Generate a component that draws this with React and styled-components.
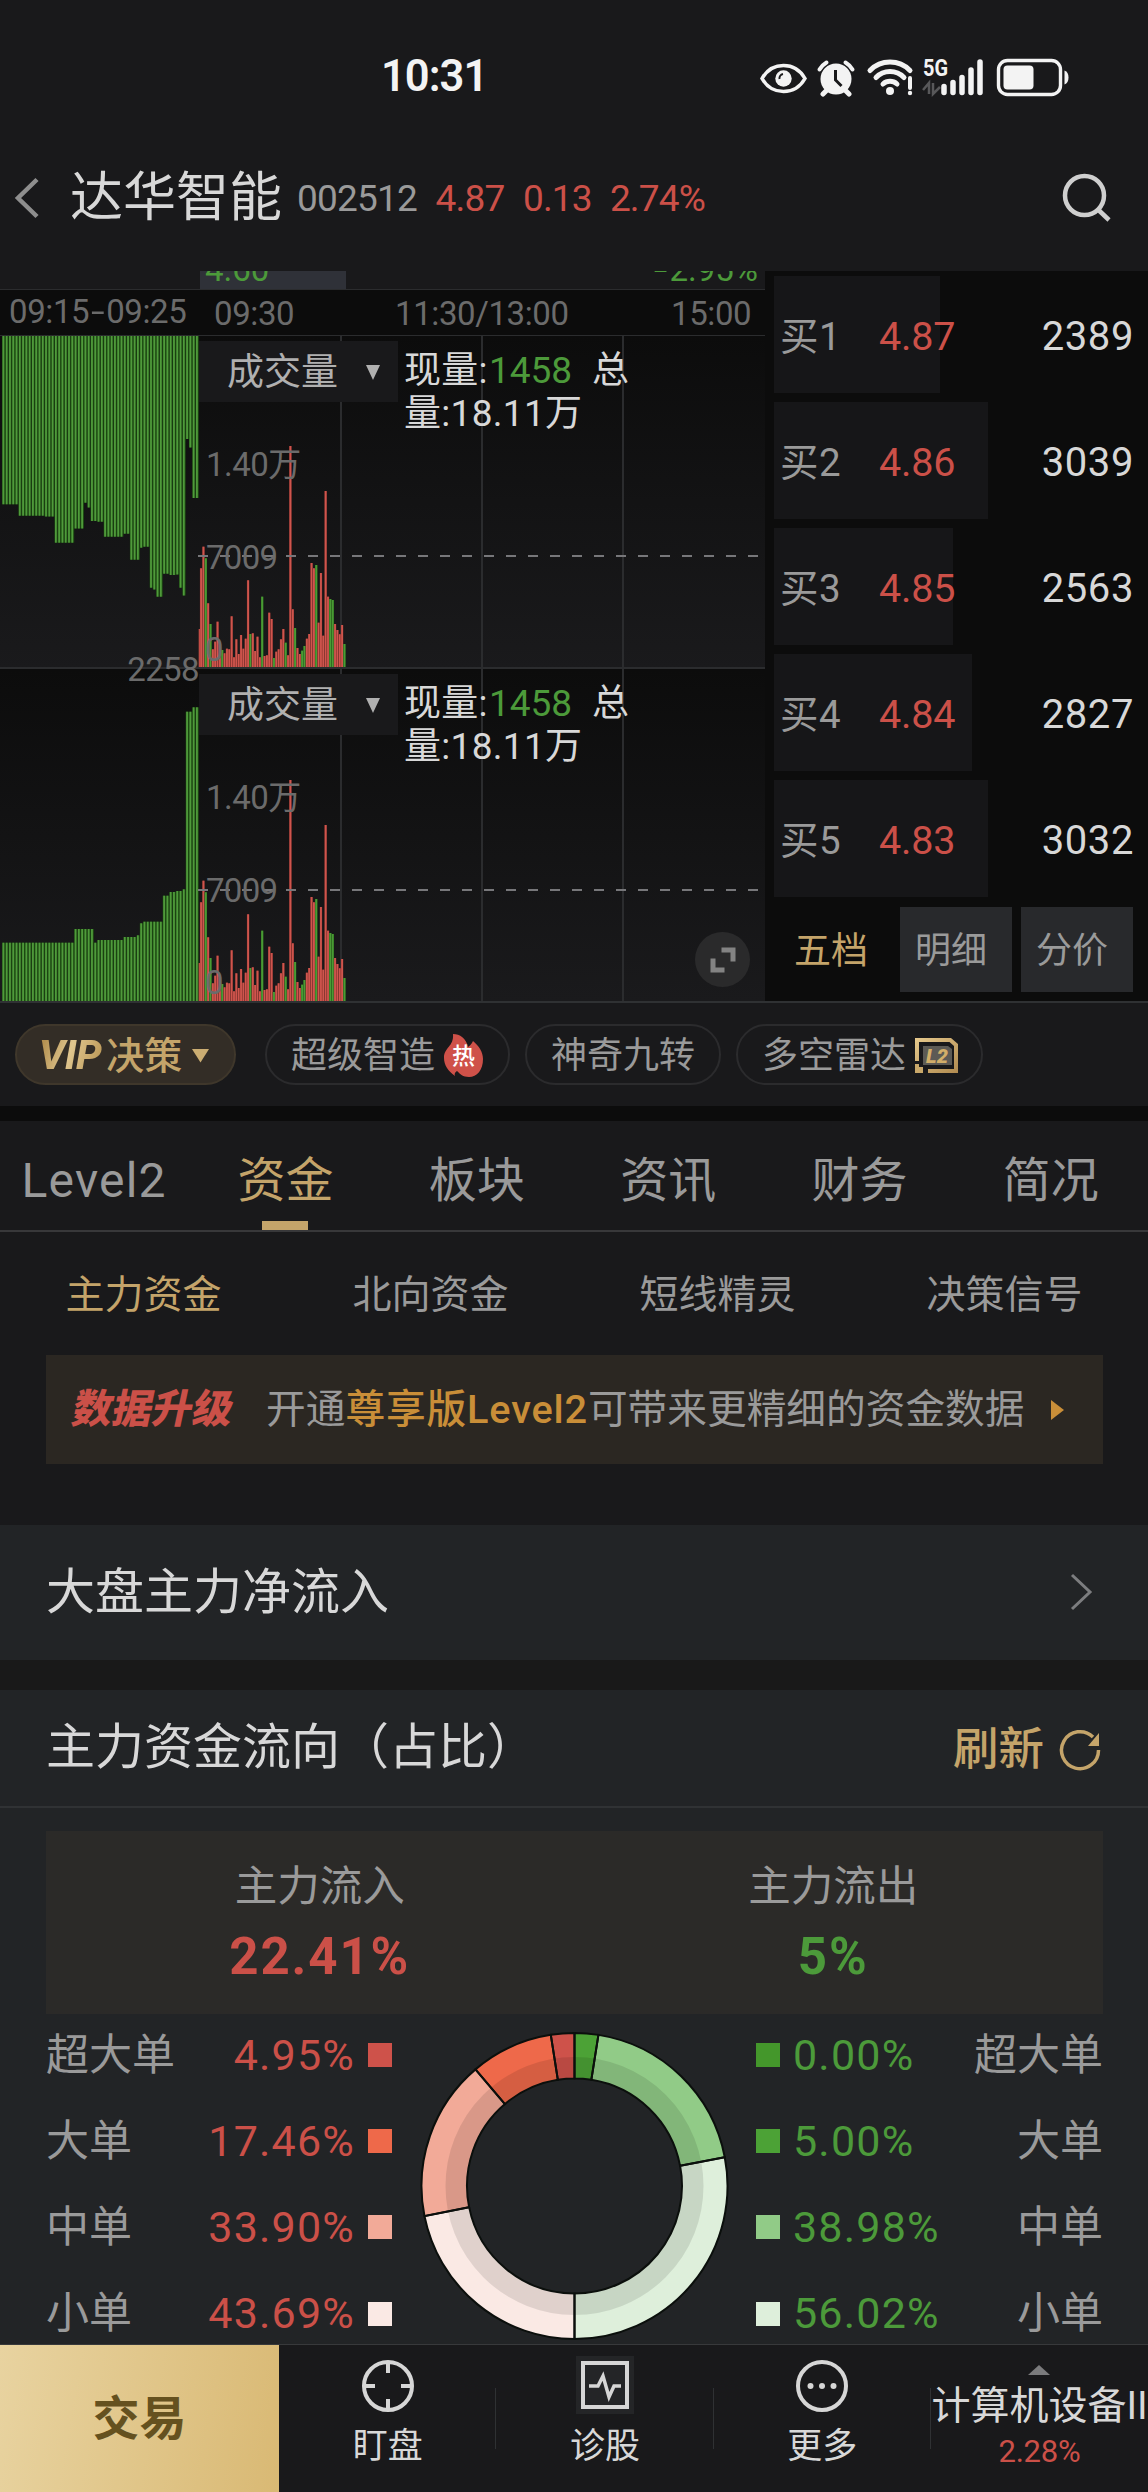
import React from "react";
import styled, { createGlobalStyle } from "styled-components";

const C = {
  bg: "#19191b",
  deep: "#0c0c0c",
  card: "#222426",
  line: "#2f3133",
  grid: "#2b2c2e",
  dim: "#6b6b6b",
  grey: "#9a9a9a",
  white: "#d8d8d8",
  red: "#cb5048",
  green: "#4c9a3a",
  gold: "#c4a46a",
};

const Global = createGlobalStyle`
  html, body { margin: 0; padding: 0; background: ${C.bg}; }
  * { box-sizing: border-box; }
  body {
    font-family: Roboto, "Noto Sans CJK SC", sans-serif;
    -webkit-font-smoothing: antialiased;
  }
`;

const Page = styled.div`
  width: 1148px;
  height: 2492px;
  overflow: hidden;
  display: flex;
  flex-direction: column;
  background: ${C.bg};
`;

const Txt = styled.span`
  display: block;
  flex: none;
  white-space: pre;
  line-height: 1;
  font-size: ${(p) => p.$s || 36}px;
  color: ${(p) => p.$c || C.grey};
  font-weight: ${(p) => p.$w || 400};
  letter-spacing: ${(p) => p.$ls || 0}px;
`;

/* ---------- status bar ---------- */
const StatusBar = styled.div`
  flex: none;
  height: 124px;
  padding: 30px 79px 0 381px;
  display: flex;
  align-items: center;
  justify-content: space-between;
`;
const StatusIcons = styled.div`
  display: flex;
  align-items: center;
`;

const StatusGlyphs = () => (
  <svg width="309" height="40" viewBox="760 57 309 40" fill="none">
    <path d="M762 78.500C768 68 776 65.500 783.500 65.500S799 68 805 78.500C799 89 791 91.500 783.500 91.500S768 89 762 78.500Z" stroke="#f3f3f3" strokeWidth="3.500" />
    <circle cx="783.500" cy="78.500" r="8.200" fill="#f3f3f3" />
    <path d="M779.500 79a4.500 4.500 0 0 1 3.500-5" stroke="#19191b" strokeWidth="2" />
    <circle cx="836" cy="79" r="15.500" fill="#f3f3f3" />
    <path d="M819.500 69.500a20 20 0 0 1 7-7M845.500 62.500a20 20 0 0 1 7 7" stroke="#f3f3f3" strokeWidth="4" strokeLinecap="round" />
    <path d="M827 90l-4 4M845 90l4 4" stroke="#f3f3f3" strokeWidth="5" strokeLinecap="round" />
    <path d="M835.500 70v10l6 6" stroke="#19191b" strokeWidth="3" />
    <path d="M870 70.500a28 28 0 0 1 40 0" stroke="#f3f3f3" strokeWidth="5" strokeLinecap="round" />
    <path d="M876 77.500a19.500 19.500 0 0 1 28 0" stroke="#f3f3f3" strokeWidth="5" strokeLinecap="round" />
    <path d="M883 84a10.500 10.500 0 0 1 14 0" stroke="#f3f3f3" strokeWidth="5" strokeLinecap="round" />
    <circle cx="890" cy="91" r="4" fill="#f3f3f3" />
    <path d="M910 78v10" stroke="#f3f3f3" strokeWidth="4" strokeLinecap="round" />
    <circle cx="910" cy="93" r="2.200" fill="#f3f3f3" />
    <text x="923" y="76" fontSize="23" fontWeight="700" fontFamily="Roboto" textLength="25" lengthAdjust="spacingAndGlyphs" fill="#f3f3f3">5G</text>
    <path d="M923 90l6-7v11M933 83v11l7-7" stroke="#58585a" strokeWidth="2.500" />
    <path d="M944 86.500v6M953 82.500v10M962 77.500v15M971 70v22.500M980 62v30.500" stroke="#f3f3f3" strokeWidth="5.500" strokeLinecap="round" />
    <rect x="998.500" y="60.500" width="62" height="34" rx="9" stroke="#f3f3f3" strokeWidth="3.400" />
    <rect x="1003.500" y="65.500" width="30" height="24" rx="4" fill="#f3f3f3" />
    <path d="M1064.500 70.500q4 1.500 4 7t-4 7z" fill="#f3f3f3" />
  </svg>
);

/* ---------- title bar ---------- */
const TitleBar = styled.header`
  flex: none;
  height: 147px;
  padding: 1px 36px 0 14px;
  display: flex;
  align-items: center;
`;
const TitleName = styled(Txt)`
  margin: 0 15px 0 30px;
`;
const Quote = styled(Txt)`
  margin-right: ${(p) => p.$mr || 0}px;
`;
const Spring = styled.div`
  flex: 1;
`;

/* ---------- market area ---------- */
const Market = styled.section`
  flex: none;
  height: 732px;
  display: flex;
  background: ${C.deep};
  border-bottom: 2px solid ${C.line};
`;
const Charts = styled.div`
  width: 765px;
  display: flex;
  flex-direction: column;
`;
const PriceStrip = styled.div`
  flex: none;
  height: 18px;
  overflow: hidden;
  display: flex;
  justify-content: space-between;
  background: ${C.bg};
  padding-right: 7px;
`;
const PriceFoot = styled.div`
  width: 347px;
  height: 18px;
  padding-left: 205px;
  display: flex;
  background: linear-gradient(90deg, transparent 200px, #2f3138 200px, #2f3138 346px, transparent 346px);
`;
const Clipped = styled(Txt)`
  margin-top: ${(p) => p.$mt}px;
`;
const TimeAxis = styled.div`
  flex: none;
  height: 47px;
  display: grid;
  grid-template-columns: 199px 182px 1fr 80px;
  align-items: center;
  border-top: 1px solid ${C.grid};
  border-bottom: 1px solid ${C.grid};
  padding-right: 14px;
`;
const AxisCell = styled.div`
  display: flex;
  padding: ${(p) => p.$pt || 0}px 0 ${(p) => p.$pb || 0}px ${(p) => p.$pl || 0}px;
`;
const Hyphen = styled.span`
  display: inline-block;
  width: 17px;
  text-align: center;
  transform: scaleX(1.5);
`;
const Panel = styled.div`
  flex: none;
  height: ${(p) => p.$h}px;
  position: relative;
  background: linear-gradient(180deg, #0c0c0c, #1a1a1c);
`;
const PanelSvg = styled.svg`
  display: block;
`;
const Selector = styled.div`
  position: absolute;
  left: 199px;
  top: 5px;
  width: 199px;
  height: 61px;
  background: ${C.bg};
  display: flex;
  align-items: center;
  justify-content: space-between;
  padding: 1px 18px 0 28px;
`;
const Down = styled.i`
  width: 0;
  height: 0;
  border-left: ${(p) => p.$w}px solid transparent;
  border-right: ${(p) => p.$w}px solid transparent;
  border-top: ${(p) => p.$h}px solid ${(p) => p.$c};
`;
const Info = styled.div`
  position: absolute;
  left: 404px;
  top: 13px;
  width: 250px;
  font-size: 37px;
  line-height: 43px;
  letter-spacing: 0.3px;
  color: ${C.white};
  em { font-style: normal; color: ${C.green}; margin-left: 1px; letter-spacing: 0; }
  i { display: inline-block; width: 20px; }
`;
const Mark = styled(Txt)`
  position: absolute;
  ${(p) => (p.$r ? `right: ${p.$r}px` : `left: ${p.$x}px`)};
  top: ${(p) => p.$y}px;
`;
const Expand = styled.div`
  position: absolute;
  left: 695px;
  top: 263px;
  width: 55px;
  height: 55px;
  border-radius: 50%;
  background: #2a2a2b;
  display: flex;
  align-items: center;
  justify-content: center;
`;

const auctionHanging = [
  [51, 504.3], [129, 515.7], [159, 516.5], [217, 542.7], [247, 528.5], [265, 502.7], [275, 507.5], [286, 521],
  [295, 518.5], [313, 521.7], [373, 536.7], [391, 533.7], [420, 559.7], [430, 547.7], [451, 546.7], [460, 587.7],
  [469, 589.5], [490, 596.7], [508, 573.7], [529, 575], [538, 574.5], [547, 587.7], [556, 595.5], [566, 439],
  [576, 447.5], [600, 498],
];
const auctionRising = [
  [217, 942.7], [276, 929], [286, 942.7], [373, 940], [412, 937], [421, 935.3], [430, 923.3], [490, 921.7],
  [508, 895.7], [529, 892], [547, 891], [556, 889.3], [576, 711.7], [600, 707.3],
];
const level = (steps, i) => {
  const x = 10 + i * 9.85;
  return (steps.find((s) => x <= s[0]) || steps[steps.length - 1])[1];
};

const trades =
  "r98.7 r120.3 g108.7 r63.7 g43 r17.7 r25.3 r45.3 r24.3 g17 r13.7 r18.3 r17.7 r50.7 r9.7 r27.7 r13 r32 r18.3 r28.3 r86.7 g33 r33.7 r16 r30.3 r9.7 g70.3 r11 r11.7 r54.3 r48 g9 r15.3 r17.7 r27.7 r38 g24.3 r11.7 r221 r57.7 g39 r19 r13 g16.3 g21 r28.3 r33 r104 r98.7 g102 r44.3 r94 r31.300 r176 r70.300 g68 g67 r43 r37 r32.700 r42 g23"
    .split(" ")
    .map((t) => ({ up: t[0] === "r", h: parseFloat(t.slice(1)) }));

const Stripe = ({ x, y, h }) => (
  <g>
    <rect x={x} y={y} width="3.300" height={h} fill="#1d4a12" />
    <rect x={x + 0.500} y={y} width="1.800" height={h} fill="#4f9a3b" />
  </g>
);

const VolumePanel = ({ height, base, offset, steps, hanging, children }) => {
  const dash = hanging ? 220 : 221;
  return (
    <Panel $h={height}>
      <PanelSvg width="765" height={height}>
        <g fill={C.grid}>
          <rect x="340" y="0" width="2" height={height} />
          <rect x="481" y="0" width="2" height={height} />
          <rect x="622" y="0" width="2" height={height} />
          {hanging && <rect x="0" y={base} width="765" height="2" />}
        </g>
        {Array.from({ length: 60 }, (_, i) => {
          const v = level(steps, i) - offset;
          return hanging ? (
            <Stripe key={i} x={2 + i * 3.280} y={0} h={v} />
          ) : (
            <Stripe key={i} x={2 + i * 3.280} y={v} h={base - v} />
          );
        })}
        <rect x="198.700" y={base - 38} width="1.300" height="38" fill={C.red} />
        {trades.map((t, i) => (
          <g key={i}>
            <rect x={199.900 + i * 2.350} y={base - t.h} width="2.400" height={t.h} fill={t.up ? "#7e2f2b" : "#2a6a1a"} />
            <rect x={200.200 + i * 2.350} y={base - t.h} width="1.800" height={t.h} fill={t.up ? "#cf554d" : "#4a9a35"} />
          </g>
        ))}
        <path d={`M198 ${dash}H760`} stroke="#77777a" strokeWidth="2" strokeDasharray="10 12" />
      </PanelSvg>
      <Selector>
        <Txt $s={37} $c="#b0b0b0">成交量</Txt>
        <Down $w={7.5} $h={15} $c="#b0b0b0" />
      </Selector>
      <Info>
        现量:<em>1458</em><i />总<br />量:18.11万
      </Info>
      <Mark $s={33} $c={C.dim} $x={206} $y={112} $ls={-0.5}>1.40万</Mark>
      <Mark $s={33} $c={C.dim} $x={206} $y={204.5} $ls={-0.7}>7009</Mark>
      <Mark $s={33} $c={C.dim} $x={205} $y={297}>0</Mark>
      {children}
    </Panel>
  );
};

/* ---------- order book ---------- */
const Book = styled.div`
  width: 383px;
  padding: 5px 0 0 9px;
  display: flex;
  flex-direction: column;
`;
const BookRow = styled.div`
  flex: none;
  height: 117px;
  margin-bottom: 9px;
  padding: 5px 14px 0 6px;
  display: grid;
  grid-template-columns: 99px 1fr auto;
  align-items: center;
  background: linear-gradient(#161618, #161618) 0 0 / ${(p) => p.$w}px 100% no-repeat;
`;
const BookTabs = styled.div`
  display: flex;
  gap: 9px;
  height: 86px;
  padding-top: 1px;
`;
const BookTab = styled.div`
  width: ${(p) => (p.$on ? 117 : 112)}px;
  height: 85px;
  display: flex;
  align-items: center;
  padding-top: 3px;
  padding-left: ${(p) => (p.$on ? 20 : 15)}px;
  background: ${(p) => (p.$on ? "transparent" : "#28292c")};
`;

/* ---------- tool pills ---------- */
const Pills = styled.div`
  flex: none;
  height: 103px;
  padding: 21px 0 0 15px;
  display: flex;
  align-items: flex-start;
`;
const Pill = styled.div`
  width: ${(p) => p.$w}px;
  height: 61px;
  margin-right: ${(p) => p.$mr}px;
  display: flex;
  align-items: center;
  border-radius: 31px;
  border: 2px solid ${(p) => (p.$vip ? "#3f372b" : "#2b2b2d")};
  background: ${(p) => (p.$vip ? "#332d26" : "transparent")};
  padding: 2px 0 0 ${(p) => (p.$vip ? 22 : 24)}px;
`;
const Vip = styled(Txt)`
  font-style: italic;
  padding-right: 5px;
  background: linear-gradient(110deg, #a98443, #e0c68e 45%, #b18b47);
  -webkit-background-clip: text;
  background-clip: text;
  color: transparent;
`;
const PillArt = styled.svg`
  flex: none;
  margin-left: ${(p) => p.$ml}px;
`;
const Band = styled.div`
  flex: none;
  height: ${(p) => p.$h}px;
  background: ${(p) => p.$c || C.deep};
`;

/* ---------- tabs ---------- */
const Tabs = styled.nav`
  flex: none;
  height: 111px;
  display: grid;
  grid-template-columns: repeat(6, 1fr);
  border-bottom: 2px solid #38383a;
`;
const Tab = styled.div`
  display: flex;
  flex-direction: column;
  align-items: center;
  justify-content: space-between;
  padding: 36px 3px 0 0;
  &::after {
    content: "";
    width: 46px;
    height: 9px;
    background: ${(p) => (p.$on ? C.gold : "transparent")};
  }
`;
const SubTabs = styled.nav`
  flex: none;
  height: 123px;
  padding-top: 3px;
  display: grid;
  grid-template-columns: repeat(4, 1fr);
  justify-items: center;
  align-items: center;
`;
const Notice = styled.div`
  flex: none;
  height: 109px;
  margin: 0 45px 61px 46px;
  padding: 0 0 0 27px;
  display: flex;
  align-items: center;
  background: #2b2722;
`;
const NoticeTag = styled(Txt)`
  transform: skewX(-12deg);
  margin-right: 33px;
`;
const NoticeText = styled(Txt)`
  b { font-weight: 500; color: #c98e38; letter-spacing: 0.85px; }
`;
const RightTri = styled.i`
  margin-left: 27px;
  border-top: 10px solid transparent;
  border-bottom: 10px solid transparent;
  border-left: 13px solid #c98e38;
`;

/* ---------- cards ---------- */
const LinkCard = styled.div`
  flex: none;
  height: 135px;
  padding: 0 55px 1px 46px;
  display: flex;
  align-items: center;
  justify-content: space-between;
  background: ${C.card};
`;
const FlowCard = styled.section`
  flex: none;
  height: 654px;
  overflow: hidden;
  background: ${C.card};
`;
const FlowHead = styled.div`
  height: 118px;
  padding: 0 46px 1px 46px;
  display: flex;
  align-items: center;
  border-bottom: 2px solid #303234;
`;
const Refresh = styled.div`
  margin-left: auto;
  padding-top: 4px;
  display: flex;
  align-items: center;
  gap: 15px;
`;
const Summary = styled.div`
  height: 183px;
  margin: 23px 45px 0 46px;
  padding: 0 13px 0 17px;
  display: grid;
  grid-template-columns: 1fr 1fr;
  background: #2b2a28;
`;
const SummaryCell = styled.div`
  display: flex;
  flex-direction: column;
  align-items: center;
  padding-top: 35px;
  gap: 22px;
`;
const Breakdown = styled.div`
  padding: 0 45px 0 46px;
  display: flex;
  justify-content: space-between;
  align-items: flex-start;
`;
const Legend = styled.div`
  width: ${(p) => (p.$right ? 347 : 346)}px;
  margin-top: -2px;
`;
const LegendRow = styled.div`
  height: 86.2px;
  display: flex;
  align-items: center;
  justify-content: space-between;
  flex-direction: ${(p) => (p.$right ? "row-reverse" : "row")};
`;
const LegendValue = styled.div`
  display: flex;
  align-items: center;
  gap: 13px;
  flex-direction: ${(p) => (p.$right ? "row-reverse" : "row")};
`;
const Swatch = styled.i`
  width: 24px;
  height: 24px;
  background: ${(p) => p.$c};
`;
const DonutSvg = styled.svg`
  display: block;
  margin-top: 17px;
`;

const inflow = [
  { name: "超大单", value: "4.95%", share: 4.95, color: "#ce524a" },
  { name: "大单", value: "17.46%", share: 17.46, color: "#ee694a" },
  { name: "中单", value: "33.90%", share: 33.9, color: "#f2aa98" },
  { name: "小单", value: "43.69%", share: 43.69, color: "#fae9e4" },
];
const outflow = [
  { name: "超大单", value: "0.00%", share: 0, color: "#44972b" },
  { name: "大单", value: "5.00%", share: 5, color: "#4ca236" },
  { name: "中单", value: "38.98%", share: 38.98, color: "#91cb87" },
  { name: "小单", value: "56.02%", share: 56.02, color: "#deefdb" },
];

const Donut = () => {
  const R = 153, r = 107.5, m = 129;
  const pt = (rad, deg) => {
    const a = (deg * Math.PI) / 180;
    return `${(154.5 + rad * Math.sin(a)).toFixed(2)} ${(155 - rad * Math.cos(a)).toFixed(2)}`;
  };
  const ring = (o, n, a, b) =>
    `M${pt(o, a)}A${o} ${o} 0 0 1 ${pt(o, b)}L${pt(n, b)}A${n} ${n} 0 0 0 ${pt(n, a)}Z`;
  const slices = [];
  let at = 0;
  [...outflow.filter((s) => s.share > 0), ...[...inflow].reverse()].forEach((s) => {
    const end = at + s.share * 1.8;
    slices.push({ color: s.color, a: at, b: end });
    at = end;
  });
  return (
    <DonutSvg width="309" height="310">
      {slices.map((s, i) => (
        <path key={i} d={ring(R, r, s.a, s.b)} fill={s.color} />
      ))}
      <circle cx="154.500" cy="155" r={(m + r) / 2} fill="none" stroke="#000" strokeOpacity="0.100" strokeWidth={m - r} />
      {slices.map((s, i) => (
        <path key={i} d={ring(R, r, s.a, s.b)} fill="none" stroke="#0b0f0c" strokeWidth="2" />
      ))}
    </DonutSvg>
  );
};

/* ---------- bottom bar ---------- */
const BottomBar = styled.footer`
  flex: none;
  height: 148px;
  display: flex;
  border-top: 1px solid #38393b;
  background: ${C.bg};
`;
const TradeButton = styled.div`
  width: 279px;
  display: flex;
  align-items: center;
  justify-content: center;
  background: linear-gradient(100deg, #e8d3a0, #d9b974);
`;
const NavItem = styled.div`
  flex: 1;
  display: flex;
  flex-direction: column;
  align-items: center;
  padding-top: 10px;
  gap: 14px;
  background: linear-gradient(${C.line}, ${C.line}) 100% 43px / 1px 61px no-repeat;
`;
const IndexItem = styled.div`
  width: 217px;
  overflow: hidden;
  display: flex;
  flex-direction: column;
  align-items: center;
  padding-top: 20px;
`;
const Up = styled.i`
  border-left: 11px solid transparent;
  border-right: 11px solid transparent;
  border-bottom: 10px solid #7b7b7d;
  margin-bottom: 12px;
`;
const IndexName = styled(Txt)`
  margin-bottom: 10px;
`;

const bids = [
  ["买1", "4.87", "2389", 166],
  ["买2", "4.86", "3039", 214],
  ["买3", "4.85", "2563", 179],
  ["买4", "4.84", "2827", 198],
  ["买5", "4.83", "3032", 214],
];

export default function App() {
  return (
    <Page>
      <Global />
      <StatusBar>
        <Txt $s={43.500} $c="#f3f3f3" $w={600} $ls={-1}>10:31</Txt>
        <StatusIcons>
          <StatusGlyphs />
        </StatusIcons>
      </StatusBar>

      <TitleBar>
        <svg width="26" height="42" fill="none">
          <path d="M23 2.500L4 21l19 18.500" stroke="#8e8e8e" strokeWidth="4.500" />
        </svg>
        <TitleName $s={53} $c={C.white}>达华智能</TitleName>
        <Quote $s={37} $c={C.grey} $ls={-0.8} $mr={18.500}>002512</Quote>
        <Quote $s={37} $c={C.red} $ls={-0.8} $mr={18.500}>4.87</Quote>
        <Quote $s={37} $c={C.red} $ls={-0.8} $mr={18}>0.13</Quote>
        <Quote $s={37} $c={C.red} $ls={-0.8}>2.74%</Quote>
        <Spring />
        <svg width="50" height="50" fill="none">
          <circle cx="22.500" cy="22.500" r="19.500" stroke="#cfcfcf" strokeWidth="4.500" />
          <path d="M36 36.500l11 10.500" stroke="#cfcfcf" strokeWidth="4.500" />
        </svg>
      </TitleBar>

      <Market>
        <Charts>
          <PriceStrip>
            <PriceFoot>
              <Clipped $s={33} $c={C.green} $mt={-18}>4.60</Clipped>
            </PriceFoot>
            <Clipped $s={33} $c={C.green} $mt={-18} $ls={0}>
              <Hyphen>-</Hyphen>2.95%
            </Clipped>
          </PriceStrip>
          <TimeAxis>
            <AxisCell $pl={9} $pb={2}>
              <Txt $s={33} $c={C.dim} $ls={-0.4}>
                09:15<Hyphen>-</Hyphen>09:25
              </Txt>
            </AxisCell>
            <AxisCell $pl={15} $pt={2}>
              <Txt $s={33} $c={C.dim} $ls={-0.4}>09:30</Txt>
            </AxisCell>
            <AxisCell $pl={14} $pt={2}>
              <Txt $s={33} $c={C.dim} $ls={-0.4}>11:30/13:00</Txt>
            </AxisCell>
            <AxisCell $pt={2}>
              <Txt $s={33} $c={C.dim} $ls={-0.4}>15:00</Txt>
            </AxisCell>
          </TimeAxis>
          <VolumePanel height={333} base={331} offset={336} steps={auctionHanging} hanging />
          <VolumePanel height={332} base={332} offset={669} steps={auctionRising}>
            <Mark $s={33} $c={C.dim} $r={566} $y={-16} $ls={-0.6}>2258</Mark>
            <Expand>
              <svg width="26" height="26" fill="none" stroke="#838383" strokeWidth="5">
                <path d="M11.500 3H23v11.500M3 11.500V23h11.500" />
              </svg>
            </Expand>
          </VolumePanel>
        </Charts>
        <Book>
          {bids.map(([side, price, volume, w]) => (
            <BookRow key={side} $w={w}>
              <Txt $s={38.500} $ls={0.6}>{side}</Txt>
              <Txt $s={39.500} $c={C.red} $ls={-0.2}>{price}</Txt>
              <Txt $s={40} $c={C.white} $ls={0.6}>{volume}</Txt>
            </BookRow>
          ))}
          <BookTabs>
            <BookTab $on>
              <Txt $s={37} $c={C.gold}>五档</Txt>
            </BookTab>
            <BookTab>
              <Txt $s={36}>明细</Txt>
            </BookTab>
            <BookTab>
              <Txt $s={36}>分价</Txt>
            </BookTab>
          </BookTabs>
        </Book>
      </Market>

      <Pills>
        <Pill $vip $w={221} $mr={29}>
          <Vip $s={41} $w={800} $ls={-0.5}>VIP</Vip>
          <Txt $s={38} $c={C.gold} $w={500}>决策</Txt>
          <PillArt $ml={10} width="17" height="14">
            <path d="M0 0H17L8.500 13.500Z" fill="#cbad72" />
          </PillArt>
        </Pill>
        <Pill $w={245} $mr={15}>
          <Txt $s={36}>超级智造</Txt>
          <PillArt $ml={8} width="42" height="46" viewBox="0 0 42 46">
            <path d="M10 1C17 1 23 5 25 14C28 12 29 10 30 8C36 13 40 19 40 26C40 37 34 44 26 44C20 44 17 41 14 38C12 39 11 41 12 43C5 38 1 32 1 25C1 14 11 14 10 1Z" fill="#cf5149" />
            <text x="20.500" y="31" fontSize="23" fontWeight="500" textAnchor="middle" fill="#fff">热</text>
          </PillArt>
        </Pill>
        <Pill $w={196} $mr={15}>
          <Txt $s={36}>神奇九转</Txt>
        </Pill>
        <Pill $w={247} $mr={0}>
          <Txt $s={36}>多空雷达</Txt>
          <PillArt $ml={9} width="44" height="36" viewBox="0 0 44 36">
            <defs>
              <linearGradient id="l2" x1="0" y1="0" x2="1" y2="1">
                <stop offset="0" stopColor="#e6c98d" />
                <stop offset="1" stopColor="#b18b50" />
              </linearGradient>
            </defs>
            <path d="M0 0H36L43 6V35H13V31H39V8L34.500 4H4V23H0Z" fill="url(#l2)" />
            <path d="M0 26H4V29H8V35H0Z" fill="#c9a86a" />
            <path d="M8 8H33L37 11V27H8Z" fill="#5c5a55" />
            <text x="22" y="25" fontSize="20" fontWeight="900" fontStyle="italic" textAnchor="middle" fill="#d2ae69">L2</text>
          </PillArt>
        </Pill>
      </Pills>
      <Band $h={15} />

      <Tabs>
        {["Level2", "资金", "板块", "资讯", "财务", "简况"].map((t, i) => (
          <Tab key={t} $on={i === 1}>
            <Txt $s={48} $c={i === 1 ? C.gold : C.grey} $ls={i === 0 ? 1.2 : 0}>{t}</Txt>
          </Tab>
        ))}
      </Tabs>
      <SubTabs>
        {["主力资金", "北向资金", "短线精灵", "决策信号"].map((t, i) => (
          <Txt key={t} $s={39} $c={i === 0 ? C.gold : C.grey}>{t}</Txt>
        ))}
      </SubTabs>
      <Notice>
        <NoticeTag $s={40} $c={C.red} $w={800}>数据升级</NoticeTag>
        <NoticeText $s={39.7}>
          开通<b>尊享版Level2</b>可带来更精细的资金数据
        </NoticeText>
        <RightTri />
      </Notice>

      <LinkCard>
        <Txt $s={49} $c={C.white}>大盘主力净流入</Txt>
        <svg width="24" height="38" fill="none">
          <path d="M3 2l18 17L3 36" stroke="#7c7d7f" strokeWidth="3" />
        </svg>
      </LinkCard>
      <Band $h={30} $c="#191919" />
      <FlowCard>
        <FlowHead>
          <Txt $s={49} $c={C.white}>主力资金流向（占比）</Txt>
          <Refresh>
            <Txt $s={45.500} $c={C.gold} $w={500}>刷新</Txt>
            <svg width="43" height="42" fill="none">
              <path d="M39.500 21A18.500 18.500 0 1 1 34 8" stroke={C.gold} strokeWidth="3.500" />
              <path d="M40 4v13H29z" fill={C.gold} />
            </svg>
          </Refresh>
        </FlowHead>
        <Summary>
          <SummaryCell>
            <Txt $s={42.500}>主力流入</Txt>
            <Txt $s={51} $c={C.red} $w={700} $ls={1.9}>22.41%</Txt>
          </SummaryCell>
          <SummaryCell>
            <Txt $s={42.500}>主力流出</Txt>
            <Txt $s={51} $c={C.green} $w={700} $ls={1.9}>5%</Txt>
          </SummaryCell>
        </Summary>
        <Breakdown>
          <Legend>
            {inflow.map((s) => (
              <LegendRow key={s.name}>
                <Txt $s={43}>{s.name}</Txt>
                <LegendValue>
                  <Txt $s={43} $c={C.red} $ls={1.2}>{s.value}</Txt>
                  <Swatch $c={s.color} />
                </LegendValue>
              </LegendRow>
            ))}
          </Legend>
          <Donut />
          <Legend $right>
            {outflow.map((s) => (
              <LegendRow key={s.name} $right>
                <Txt $s={43}>{s.name}</Txt>
                <LegendValue $right>
                  <Txt $s={43} $c={C.green} $ls={1.2}>{s.value}</Txt>
                  <Swatch $c={s.color} />
                </LegendValue>
              </LegendRow>
            ))}
          </Legend>
        </Breakdown>
      </FlowCard>

      <BottomBar>
        <TradeButton>
          <Txt $s={47} $c="#65511f" $w={700}>交易</Txt>
        </TradeButton>
        <NavItem>
          <svg width="58" height="60" fill="none" stroke="#d6d6d6" strokeWidth="4">
            <circle cx="29" cy="31" r="24" />
            <path d="M29 6v12M29 44v12M4 31h12M42 31h12" />
          </svg>
          <Txt $s={35} $c={C.white}>盯盘</Txt>
        </NavItem>
        <NavItem>
          <svg width="58" height="60" fill="none" stroke="#d6d6d6" strokeWidth="4">
            <rect x="0" y="1" width="58" height="58" fill="#242527" stroke="none" />
            <rect x="7" y="8" width="44" height="44" />
            <path d="M13 31h9l5-10 6 21 5-11h7" strokeWidth="3.500" />
          </svg>
          <Txt $s={35} $c={C.white}>诊股</Txt>
        </NavItem>
        <NavItem>
          <svg width="58" height="60" fill="none" stroke="#d6d6d6" strokeWidth="4">
            <circle cx="29" cy="31" r="24" />
            <g fill="#d6d6d6" stroke="none">
              <circle cx="17.500" cy="31" r="3" />
              <circle cx="29" cy="31" r="3" />
              <circle cx="40.500" cy="31" r="3" />
            </g>
          </svg>
          <Txt $s={35} $c={C.white}>更多</Txt>
        </NavItem>
        <IndexItem>
          <Up />
          <IndexName $s={39} $c={C.white}>计算机设备II</IndexName>
          <Txt $s={31} $c={C.red} $ls={-0.2}>2.28%</Txt>
        </IndexItem>
      </BottomBar>
    </Page>
  );
}
